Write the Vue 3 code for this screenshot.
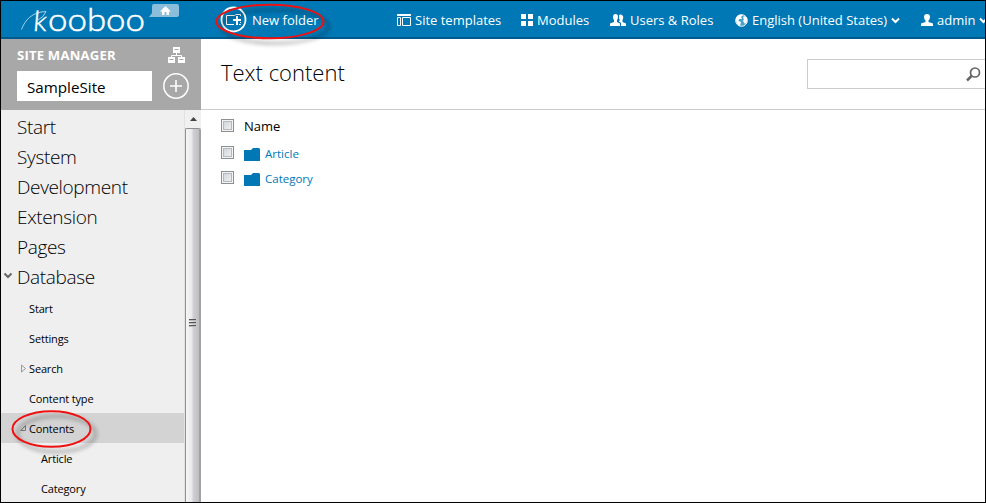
<script setup>
const sections = ['Start', 'System', 'Development', 'Extension', 'Pages', 'Database']
const children = [
  { label: 'Start' },
  { label: 'Settings' },
  { label: 'Search', arrow: 'closed' },
  { label: 'Content type' },
  { label: 'Contents', arrow: 'open', active: true },
  { label: 'Article', deep: true },
  { label: 'Category', deep: true },
]
const folders = ['Article', 'Category']
</script>

<template>
  <div class="page">
    <header class="topbar">
      <div class="brand">
        <svg class="logo" width="125" height="34" viewBox="0 0 125 34">
          <path d="M.5 25.500C4 16 11 8 25 7.500Q23 13 17 16" fill="none" stroke="#b5d8ea" stroke-width=".9" />
          <text class="k" x="14" y="26.500" transform="skewX(-5)">k</text>
          <text x="27" y="26.500" textLength="97" lengthAdjust="spacingAndGlyphs">ooboo</text>
        </svg>
        <svg class="home" width="31" height="15" viewBox="0 0 31 15">
          <path d="M5 0H28Q30 0 30 2V11Q30 13 28 13H0L3 9V2Q3 0 5 0Z" fill="#8abedb" />
          <path d="M11 7.500L16.500 2L22 7.500H20V11H17.500V8H15.500V11H13V7.500Z" fill="#fff" />
        </svg>
      </div>
      <a class="new-folder">
        <svg width="27" height="27" viewBox="0 0 27 27" fill="none" stroke="#fff">
          <circle cx="13.500" cy="13.500" r="12" stroke-width="1.800" />
          <path d="M14 18.500H6.500V9.500H14.500L16 8.500H20.500V10" />
          <path d="M17 10V18M13 14H21" stroke-width="2" />
          <path d="M16 18.500H20.500V16" stroke-dasharray="2 1" />
        </svg>
        <span>New folder</span>
      </a>
      <nav class="links">
        <a class="l-templates">
          <svg width="14" height="12" viewBox="0 0 14 12"><path d="M0 0H14V2H0Z" fill="#fff" /><path d="M.5 3.500H3.500V11.500H.5ZM5.500 3.500H13.500V11.500H5.500Z" fill="none" stroke="#fff" /></svg>
          <span>Site templates</span>
        </a>
        <a class="l-modules">
          <svg width="12" height="12" viewBox="0 0 12 12"><path d="M0 0H5V5H0ZM7 0H12V5H7ZM0 7H5V12H0ZM7 7H12V12H7Z" fill="#fff" /></svg>
          <span>Modules</span>
        </a>
        <a class="l-users">
          <svg width="16" height="12" viewBox="0 0 16 12" fill="#fff"><path d="M3 3Q3 0 5.500 0Q8 0 8 3Q8 5 7 6V8L10 9.500V12H0V9.500L4 8V6Q3 5 3 3Z" /><path d="M9 1Q11 0 12.500 1.500Q14 3 12.500 6V8L16 9.500V12H11V9L9 7.500Q10.500 6 9 4Z" /></svg>
          <span>Users &amp; Roles</span>
        </a>
        <a class="l-lang">
          <svg width="13" height="13" viewBox="0 0 13 13"><circle cx="6.500" cy="6.500" r="5.800" fill="#4ba0cc" stroke="#fff" stroke-width="1" /><path d="M2 2L5 .7L8 1L6 3L7 5L4 5L3.500 7L6 8L5 12Q1 10 1 5ZM9 2L12 4V8L10 10L8 7L9 5L8 4Z" fill="#fff" /></svg>
          <span>English (United States)</span>
          <svg class="chev" width="9" height="7" viewBox="0 0 9 7"><path d="M1 1.500L4.500 5L8 1.500" fill="none" stroke="#fff" stroke-width="2" /></svg>
        </a>
        <a class="l-admin">
          <svg width="12" height="12" viewBox="0 0 12 12"><path d="M3 3Q3 0 6 0Q9 0 9 3Q9 5 7.500 6.500V8L12 9.500V12H0V9.500L4.500 8V6.500Q3 5 3 3Z" fill="#fff" /></svg>
          <span>admin</span>
          <svg class="chev" width="9" height="7" viewBox="0 0 9 7"><path d="M1 1.500L4.500 5L8 1.500" fill="none" stroke="#fff" stroke-width="2" /></svg>
        </a>
      </nav>
    </header>

    <div class="body">
      <aside class="side">
        <div class="manager">
          <div class="row title-row">
            <h2>SITE MANAGER</h2>
            <svg width="17" height="16" viewBox="0 0 17 16"><path d="M5 0H12V6H5ZM0 10H7V16H0ZM10 10H17V16H10Z" fill="#fff" /><path d="M3.500 11V8.500H13.500V11M8.500 5V8.500" fill="none" stroke="#fff" /><path d="M6.500 2.500H10.500M1.500 12.500H5.500M11.500 12.500H15.500" stroke="#a8a8a8" /></svg>
          </div>
          <div class="row">
            <div class="site"><span>SampleSite</span></div>
            <svg width="26" height="26" viewBox="0 0 26 26" fill="none" stroke="#fff"><circle cx="13" cy="13" r="12.200" stroke-width="1.500" /><path d="M13 7V19M7 13H19" stroke-width="1.600" /></svg>
          </div>
        </div>
        <div class="scroll">
          <ul class="tree">
            <li v-for="s in sections" :key="s" class="big">
              <svg v-if="s === 'Database'" class="mark" width="10" height="8" viewBox="0 0 10 8"><path d="M1.500 1.500L5 5L8.500 1.500" fill="none" stroke="#666" stroke-width="2" /></svg>
              <span>{{ s }}</span>
            </li>
            <li v-for="(c, i) in children" :key="i" class="small" :class="{ active: c.active, deep: c.deep }">
              <svg v-if="c.arrow" class="arrow" width="7" height="9" viewBox="0 0 7 9" fill="none">
                <path v-if="c.arrow === 'closed'" d="M1.500 1V8L5.500 4.500Z" stroke="#999" />
                <path v-else d="M5.500 1.500V6.500H.8Z" stroke="#777" />
              </svg>
              <span>{{ c.label }}</span>
            </li>
          </ul>
          <div class="bar">
            <div class="up"><svg width="7" height="4" viewBox="0 0 7 4"><path d="M0 4L3.500 0L7 4Z" fill="#444" /></svg></div>
            <div class="thumb"><svg width="7" height="8" viewBox="0 0 7 8"><path d="M0 .5H7M0 3.500H7M0 6.500H7" stroke="#555" /><path d="M0 1.500H7M0 4.500H7M0 7.500H7" stroke="#bbb" /></svg></div>
          </div>
        </div>
      </aside>

      <main class="main">
        <div class="heading">
          <h1>Text content</h1>
          <div class="search">
            <svg width="15" height="15" viewBox="0 0 15 15" fill="none" stroke="#666"><circle cx="9" cy="5.500" r="4.500" stroke-width="1.700" /><path d="M5.500 9L1 13.500" stroke-width="2.500" /></svg>
          </div>
        </div>
        <div class="list">
          <div class="item head"><i class="check"></i><span>Name</span></div>
          <div v-for="f in folders" :key="f" class="item">
            <i class="check"></i>
            <svg width="16" height="13" viewBox="0 0 16 13"><path d="M0 2H7L9 0H15L16 1V13H0Z" fill="#0078b6" /></svg>
            <a>{{ f }}</a>
          </div>
        </div>
      </main>
    </div>

    <svg class="ring ring-top" width="125" height="50" viewBox="0 0 125 50"><ellipse cx="56" cy="21.500" rx="53.500" ry="16.800" /></svg>
    <svg class="ring ring-side" width="96" height="54" viewBox="0 0 96 54"><ellipse cx="42.500" cy="21" rx="39" ry="17.800" /></svg>
  </div>
</template>

<style>
body { margin: 0; overflow: hidden; }
</style>

<style scoped>
* { box-sizing: border-box; }
.page { position: relative; width: 986px; height: 503px; border: 1px solid #000; background: #fff; overflow: hidden; display: flex; flex-direction: column; font-family: "Open Sans", "Noto Sans", sans-serif; color: #000; }
svg { display: block; flex: none; }
span, a, h1, h2 { white-space: nowrap; }
.topbar { flex: none; height: 38px; background: #0078b5; border-bottom: 2px solid #005a8b; display: flex; color: #fff; }
.brand { width: 219px; flex: none; display: flex; padding-left: 20px; }
.logo { margin-top: 3px; overflow: visible; }
.logo text { font: 300 31px Lato, sans-serif; fill: #fff; stroke: #fff; stroke-width: .5px; }
.logo .k { font-size: 28px; }
.home { margin: 3px 0 0 3px; }
.new-folder { width: 177px; flex: none; display: flex; align-items: center; gap: 5px; padding-top: 1px; font-size: 13px; }
.links { display: flex; align-items: center; font-size: 13px; padding-top: 2px; }
.links a { display: flex; align-items: center; flex: none; gap: 4px; }
.l-templates { width: 124px; }
.l-modules { width: 89px; }
.l-users { width: 125px; }
.l-lang { width: 186px; }
.chev { margin-top: 1px; }
.body { flex: 1; min-height: 0; display: flex; }
.side { width: 200px; flex: none; display: flex; flex-direction: column; background: #efefef; }
.manager { height: 71px; flex: none; background: #a8a8a8; padding: 7px 12px 0 16px; }
.row { display: flex; justify-content: space-between; align-items: center; }
.title-row { height: 18px; padding-right: 4px; margin-bottom: 7px; }
h2 { margin: 0; font-size: 13.1px; line-height: 18px; font-weight: 700; letter-spacing: .2px; color: #fff; }
.site { width: 135px; height: 30px; background: #fff; padding: 1px 0 0 10px; font-size: 15.2px; line-height: 30px; }
.scroll { flex: 1; min-height: 0; display: flex; }
.tree { flex: 1; margin: 0; padding: 3px 0 0; list-style: none; overflow: hidden; }
.tree li { height: 30px; position: relative; }
.tree .big { padding-left: 16px; font-size: 19px; line-height: 28px; font-weight: 300; letter-spacing: -.35px; }
.tree .small { padding-left: 28px; font-size: 11px; line-height: 32px; letter-spacing: -.15px; }
.tree .small.deep { padding-left: 40px; }
.active { background: #d3d3d3; }
.mark { position: absolute; left: 2px; top: 9px; }
.arrow { position: absolute; left: 19px; top: 11px; }
.bar { width: 17px; flex: none; border-left: 1px solid #e2e2e2; display: flex; flex-direction: column; }
.up { height: 18px; display: flex; justify-content: center; padding-top: 7px; background: #f0f0f0; }
.thumb { flex: 1; border: 1px solid #909090; border-bottom: 0; border-right: 2px solid #a2a2a2; background: linear-gradient(90deg, #f5f5f5, #e9e9eb 45%, #d0d0d3 55%, #bebec2); border-radius: 2px 2px 0 0; padding: 190px 0 0 3px; }
.main { flex: 1; min-width: 0; }
.heading { height: 71px; border-bottom: 1px solid #ccc; display: flex; justify-content: space-between; padding-left: 20px; }
h1 { margin: 17px 0 0; font-size: 22px; line-height: 32px; font-weight: 300; }
.search { width: 178px; height: 30px; margin-top: 20px; border: 1px solid #ccc; border-right: 0; display: flex; justify-content: flex-end; padding: 7px 4px 0 0; }
.list { padding: 1px 0 0 20px; }
.item { height: 25px; display: flex; align-items: center; font-size: 11.5px; color: #0078b6; }
.item svg { margin: 4px 5px 0 10px; }
.item a { padding-top: 2px; }
.head { height: 29px; font-size: 13px; color: #000; }
.head span { margin-left: 10px; }
.check { width: 13px; height: 13px; flex: none; border: 1px solid #8e8f8f; box-shadow: inset 0 0 0 1px #f4f4f4, inset 0 0 0 2px #b4b8bf; background: linear-gradient(135deg, #ccd0d5, #f5f5f5); }
.ring { position: absolute; overflow: visible; fill: none; stroke: #ed1111; stroke-width: 2; filter: drop-shadow(5px 5px 2px rgba(0, 0, 0, .4)); }
.ring-top { left: 213px; top: -1px; }
.ring-side { left: 8px; top: 407px; }
</style>
